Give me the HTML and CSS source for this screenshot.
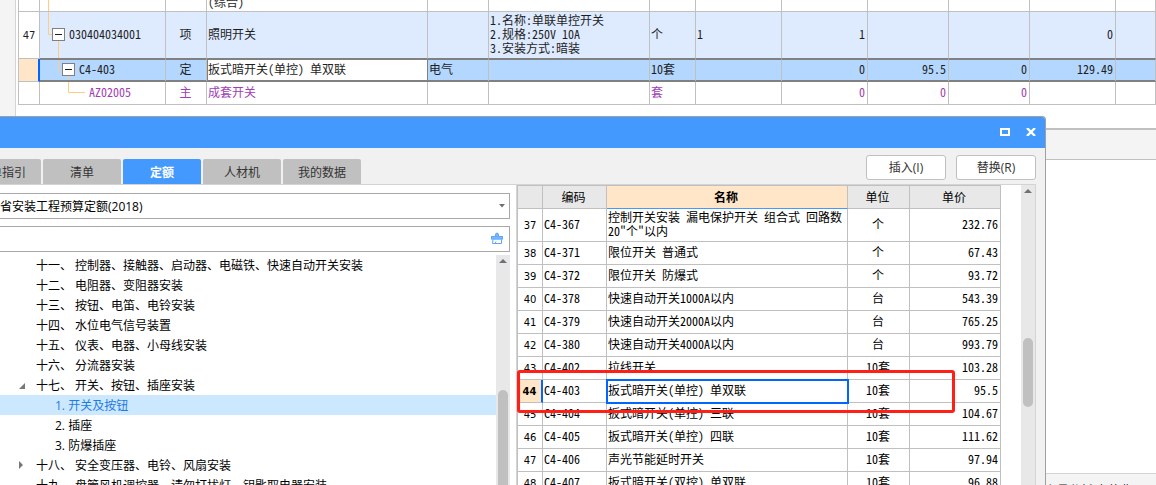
FILE: index.html
```html
<!DOCTYPE html>
<html lang="zh-CN">
<head>
<meta charset="utf-8">
<title>定额查询</title>
<link rel="stylesheet" href="styles.css">
</head>
<body>
<div class="app">
  <main class="workspace">
    <div class="gutter"></div>
    <div class="sheet-area">
      <table class="grid sheet">
        <colgroup>
          <col class="s-no"><col class="s-code"><col class="s-type"><col class="s-name"><col class="s-major"><col class="s-feature"><col class="s-unit"><col class="s-expr"><col class="s-qty"><col class="s-price"><col class="s-rate"><col class="s-total"><col>
        </colgroup>
        <tbody>
          <tr class="row-cut"><td></td><td class="tree-cell"><svg class="branch" viewBox="0 0 60 12" width="60" height="12"><path d="M8.500 0V12"/></svg></td><td></td><td><div class="cut-text">(综合)</div></td><td></td><td></td><td></td><td></td><td></td><td></td><td></td><td></td><td></td></tr>
          <tr class="row-item"><td class="num">47</td><td class="tree-cell"><svg class="branch" viewBox="0 0 60 46" width="60" height="46"><path d="M8.500 0V22.500H12M18.500 28V46"/><rect class="box" x="12.500" y="16.500" width="12" height="12"/><path class="minus" d="M15 22.500H22"/></svg><span class="level-1">030404034001</span></td><td class="mid">项</td><td>照明开关</td><td></td><td class="feature">1.名称:单联单控开关<br>2.规格:250V 10A<br>3.安装方式:暗装</td><td>个</td><td>1</td><td class="right">1</td><td></td><td></td><td class="right">0</td><td></td></tr>
          <tr class="row-active"><td class="marker"></td><td class="tree-cell"><svg class="branch" viewBox="0 0 60 20" width="60" height="20"><path d="M18.500 0V10.500H22M28.500 16V20"/><rect class="box" x="22.500" y="3.500" width="12" height="12"/><path class="minus" d="M25 9.500H32"/></svg><span class="level-2">C4-403</span></td><td class="mid">定</td><td class="editing">扳式暗开关(单控) 单双联</td><td>电气</td><td></td><td>10套</td><td></td><td class="right">0</td><td class="right">95.5</td><td class="right">0</td><td class="right">129.49</td><td></td></tr>
          <tr class="row-material"><td></td><td class="tree-cell"><svg class="branch" viewBox="0 0 60 22" width="60" height="22"><path d="M28.500 0V10.500H45"/></svg><span class="level-3">AZ02005</span></td><td class="mid">主</td><td>成套开关</td><td></td><td></td><td>套</td><td></td><td class="right">0</td><td class="right">0</td><td class="right">0</td><td></td><td></td></tr>
        </tbody>
      </table>
    </div>
  </main>
  <section class="detail">
    <div class="detail-bar"></div>
    <div class="detail-body"></div>
    <div class="detail-foot">主量分析 安装费用</div>
  </section>

  <div class="dialog" role="dialog" aria-label="查询">
    <header class="titlebar">
      <button class="win-btn" aria-label="最大化"><svg width="10" height="8" viewBox="0 0 10 8"><rect x="1" y="1" width="8" height="6" fill="none" stroke="#fff" stroke-width="2"/></svg></button>
      <button class="win-btn" aria-label="关闭"><svg width="10" height="8" viewBox="0 0 10 8"><path d="M1 0L9 8M9 0L1 8" stroke="#fff" stroke-width="2.400"/></svg></button>
    </header>
    <div class="toolbar">
      <nav class="tabs">
        <button class="tab">清单指引</button><button class="tab">清单</button><button class="tab selected">定额</button><button class="tab">人材机</button><button class="tab">我的数据</button>
      </nav>
      <div class="actions"><button class="action">插入(I)</button><button class="action">替换(R)</button></div>
    </div>
    <div class="panes">
      <section class="left-pane">
        <div class="field">
          <select class="library" aria-label="定额库"><option>省安装工程预算定额(2018)</option></select>
          <svg class="caret" width="6" height="4" viewBox="0 0 6 4"><path d="M0 0H6L3 3.500Z" fill="#707070"/></svg>
        </div>
        <div class="field">
          <input class="search" type="text" aria-label="搜索">
          <button class="clear" aria-label="清空"><svg width="12" height="13" viewBox="0 0 12 13"><path d="M4 4V2Q6 -1 8 2V4H12V7.500H0V4Z" fill="#80b9ff"/><path d="M4.500 4V2.500Q6 0 7.500 2.500V4M.500 4.500H11.500V7H.500ZM2 7.500L1.500 11.500H10.500V7.500M4 11.500L5 9.500" fill="none" stroke="#5ca6ff"/></svg></button>
        </div>
        <div class="tree-wrap">
          <ul class="tree">
            <li>十一、 控制器、接触器、启动器、电磁铁、快速自动开关安装</li>
            <li>十二、 电阻器、变阻器安装</li>
            <li>十三、 按钮、电笛、电铃安装</li>
            <li>十四、 水位电气信号装置</li>
            <li>十五、 仪表、电器、小母线安装</li>
            <li>十六、 分流器安装</li>
            <li class="open">十七、 开关、按钮、插座安装</li>
            <li class="child current">1. 开关及按钮</li>
            <li class="child">2. 插座</li>
            <li class="child">3. 防爆插座</li>
            <li class="closed">十八、 安全变压器、电铃、风扇安装</li>
            <li>十九、 盘管风机调控器、请勿打扰灯、钥匙取电器安装</li>
          </ul>
          <div class="scrollbar"><span class="arrow"></span><span class="thumb thumb-tree"></span></div>
        </div>
      </section>
      <section class="right-pane">
        <div class="quota-wrap">
          <table class="grid quota">
            <colgroup><col class="q-no"><col class="q-code"><col><col class="q-unit"><col class="q-price"></colgroup>
            <thead><tr><th></th><th>编码</th><th class="sorted">名称</th><th>单位</th><th>单价</th></tr></thead>
            <tbody>
              <tr class="tall"><td class="num">37</td><td>C4-367</td><td>控制开关安装 漏电保护开关 组合式 回路数20"个"以内</td><td class="mid">个</td><td class="right">232.76</td></tr>
              <tr><td class="num">38</td><td>C4-371</td><td>限位开关 普通式</td><td class="mid">个</td><td class="right">67.43</td></tr>
              <tr><td class="num">39</td><td>C4-372</td><td>限位开关 防爆式</td><td class="mid">个</td><td class="right">93.72</td></tr>
              <tr><td class="num">40</td><td>C4-378</td><td>快速自动开关1000A以内</td><td class="mid">台</td><td class="right">543.39</td></tr>
              <tr><td class="num">41</td><td>C4-379</td><td>快速自动开关2000A以内</td><td class="mid">台</td><td class="right">765.25</td></tr>
              <tr><td class="num">42</td><td>C4-380</td><td>快速自动开关4000A以内</td><td class="mid">台</td><td class="right">993.79</td></tr>
              <tr><td class="num">43</td><td>C4-402</td><td>拉线开关</td><td class="mid">10套</td><td class="right">103.28</td></tr>
              <tr class="chosen"><td class="num">44</td><td>C4-403</td><td class="focus">扳式暗开关(单控) 单双联</td><td class="mid">10套</td><td class="right">95.5</td></tr>
              <tr><td class="num">45</td><td>C4-404</td><td>扳式暗开关(单控) 三联</td><td class="mid">10套</td><td class="right">104.67</td></tr>
              <tr><td class="num">46</td><td>C4-405</td><td>扳式暗开关(单控) 四联</td><td class="mid">10套</td><td class="right">111.62</td></tr>
              <tr><td class="num">47</td><td>C4-406</td><td>声光节能延时开关</td><td class="mid">10套</td><td class="right">97.94</td></tr>
              <tr><td class="num">48</td><td>C4-407</td><td>扳式暗开关(双控) 单双联</td><td class="mid">10套</td><td class="right">96.88</td></tr>
            </tbody>
          </table>
          <div class="highlight"></div>
        </div>
        <div class="scrollbar"><span class="arrow"></span><span class="thumb thumb-quota"></span></div>
      </section>
    </div>
  </div>
</div>
</body>
</html>
```

FILE: styles.css
```css
* { box-sizing: border-box; }
body { margin: 0; background: #fff; color: #1e1e1e; font: 12px/14px "Noto Sans CJK SC", sans-serif; }
button, select, input { font: inherit; color: inherit; margin: 0; border-radius: 0; }
.app { position: relative; height: 100vh; overflow: hidden; display: flex; flex-direction: column; }

/* Background worksheet */
.workspace { display: flex; height: 128px; flex: none; }
.gutter { width: 16px; flex: none; background: #f4f4f4; border-right: 1px solid #d4d4d4; }
.sheet-area { flex: 1; min-width: 0; padding-left: 2px; }
.grid { width: 100%; table-layout: fixed; border-collapse: separate; border-spacing: 0; font-feature-settings: "hwid"; }
.grid td, .grid th { padding: 0 2px 2px 1px; border-right: 1px solid #c0c0c0; border-bottom: 1px solid #c0c0c0; text-align: left; font-weight: 400; overflow: hidden; }
.grid .mid { text-align: center; }
.grid .right { text-align: right; }
.grid .num { padding: 1px 0 0; text-align: center; font-family: "DejaVu Sans", sans-serif; font-size: 10px; font-feature-settings: normal; }
.sheet td:first-child { border-left: 1px solid #c0c0c0; background: #fff; }
.sheet td { white-space: nowrap; }
.s-no { width: 22px; } .s-code { width: 126px; } .s-type { width: 41px; } .s-name { width: 221px; }
.s-major { width: 61px; } .s-feature { width: 161px; } .s-unit { width: 46px; } .s-expr { width: 86px; }
.s-qty { width: 86px; } .s-price { width: 81px; } .s-rate { width: 81px; } .s-total { width: 86px; }
.sheet .tree-cell { position: relative; }
.branch { position: absolute; left: 0; top: 0; fill: none; stroke: #ffcc80; }
.branch .box { fill: #fff; stroke: #808080; }
.branch .minus { stroke: #202020; }
.level-1 { padding-left: 28px; } .level-2 { padding-left: 38px; } .level-3 { padding-left: 48px; }
.sheet .row-cut td { height: 12px; padding-bottom: 0; }
.cut-text { height: 11px; display: flex; align-items: flex-end; padding-bottom: 2px; }
.row-item td { height: 47px; background: #deebff; border-bottom-color: #808080; }
.sheet .row-item td:first-child { border-bottom-color: #c0c0c0; }
.row-active td { height: 23px; background: #b3d7ff; border-top: 1px solid #808080; border-bottom: 2px solid #808080; }
.sheet .row-active .marker { background: #ffe6c8; border-top: 0; border-bottom: 1px solid #c0c0c0; border-right: 2px solid #0066ff; }
.sheet .row-active .editing { background: #fff; border-right-color: #808080; box-shadow: inset 1px 0 #808080; }
.row-material td { height: 23px; color: #a23db5; }

.detail { flex: 1; display: flex; flex-direction: column; min-height: 0; }
.detail-bar { height: 32px; background: #f4f4f4; border-top: 2px solid #c0c0c0; border-bottom: 1px solid #c0c0c0; }
.detail-body { flex: 1; }
.detail-foot { height: 12px; padding: 9px 0 0 1045px; background: #f4f4f4; border-top: 1px solid #d4d4d4; overflow: hidden; white-space: nowrap; }

/* Query window floating over the worksheet */
.dialog { position: absolute; left: 0; right: 110px; top: 116px; bottom: 0; display: flex; flex-direction: column; background: #f1f1f1; border-top: 1px solid #a0a0a0; border-right: 1px solid #a0a0a0; border-top-right-radius: 4px; overflow: hidden; }
.titlebar { height: 31px; flex: none; background: #4499ff; display: flex; justify-content: flex-end; align-items: center; gap: 16px; padding: 0 9px 2px 0; }
.win-btn { border: 0; padding: 0; background: none; width: 10px; height: 8px; display: flex; }
.toolbar { height: 37px; flex: none; display: flex; justify-content: space-between; align-items: flex-end; margin-right: 9px; border-bottom: 1px solid #d4d4d4; }
.tabs { display: flex; gap: 2px; margin-left: -37px; }
.tab { width: 78px; height: 25px; padding: 0; border: 0; background: #c0c0c0; color: #333; border-radius: 2px 2px 0 0; flex: none; }
.tab.selected { background: #4499ff; color: #fff; font-weight: 700; }
.actions { display: flex; gap: 10px; padding-bottom: 4px; }
.action { width: 80px; height: 25px; padding: 0; border: 1px solid #c0c0c0; border-radius: 3px; background: #fff; color: #333; font-family: "Open Sans", "Noto Sans CJK SC", sans-serif; }
.panes { flex: 1; min-height: 0; display: flex; margin-right: 9px; background: #fff; border-right: 1px solid #d4d4d4; }
.left-pane { width: 517px; flex: none; display: flex; flex-direction: column; gap: 7px; padding: 8px 6px 0 0; border-right: 1px solid #d4d4d4; font-family: "Open Sans", "Noto Sans CJK SC", sans-serif; color: #000; }
.field { position: relative; height: 26px; flex: none; }
.library, .search { appearance: none; width: 100%; height: 26px; background: #fff; border: 1px solid #a8a8a8; border-left: 0; padding: 1px 0 0; outline: 0; }
.caret { position: absolute; right: 5px; top: 11px; }
.clear { position: absolute; right: 7px; top: 6px; padding: 0; border: 0; background: none; display: flex; }
.tree-wrap { flex: 1; min-height: 0; display: flex; margin-top: -4px; overflow: hidden; }
.tree { flex: 1; list-style: none; margin: 0; padding: 0; }
.tree li { position: relative; height: 20px; line-height: 22px; padding-left: 36px; white-space: nowrap; }
.tree .child { padding-left: 55px; }
.tree .current { background: #cce8ff; color: #1f7be6; }
.tree .open::before, .tree .closed::before { content: ""; position: absolute; background: #777; }
.tree .open::before { left: 19px; top: 8px; width: 6px; height: 6px; clip-path: polygon(100% 0, 100% 100%, 0 100%); }
.tree .closed::before { left: 19px; top: 6px; width: 4px; height: 8px; clip-path: polygon(0 0, 100% 50%, 0 100%); }
.scrollbar { width: 14px; flex: none; background: #e8e8e8; display: flex; flex-direction: column; align-items: center; padding-top: 4px; }
.arrow { width: 8px; height: 4px; flex: none; background: #707078; clip-path: polygon(50% 0, 100% 100%, 0 100%); }
.thumb { width: 10px; background: #c0c0c0; border-radius: 5px; flex: none; }
.thumb-tree { margin-top: 127px; height: 140px; }
.right-pane { flex: 1; min-width: 0; display: flex; justify-content: space-between; gap: 20px; overflow: hidden; }
.quota-wrap { position: relative; flex: 1; min-width: 0; }
.quota { color: #000; border-left: 1px solid #c0c0c0; border-top: 1px solid #c0c0c0; }
.q-no { width: 25px; } .q-code { width: 64px; } .q-unit { width: 62px; } .q-price { width: 91px; }
.quota th { height: 23px; padding: 0 2px 0 0; text-align: center; background: #e8e8e8; }
.quota .sorted { background: #ffe6c8; border-bottom-color: #4499ff; font-weight: 700; }
.quota td { height: 23px; }
.quota .tall td { height: 33px; }
.chosen .num { background: #ffe6c8; border-right: 2px solid #0066ff; font-weight: 700; }
.quota .focus { outline: 2px solid #0066ff; outline-offset: -1px; }
.thumb-quota { margin-top: 145px; height: 69px; }
.highlight { position: absolute; left: 0; top: 185px; right: 46px; height: 43px; border: 3px solid #ff1f16; border-radius: 3px; }
```
